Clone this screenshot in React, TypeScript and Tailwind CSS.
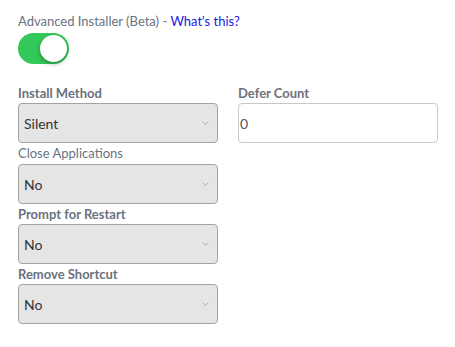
import React, { useState } from 'react';

const font = { fontFamily: 'Lato, "Open Sans", sans-serif' };

function Chevron() {
  return (
    <svg width="7" height="4" viewBox="0 0 7 4" className="absolute right-[8px] top-1/2 -translate-y-1/2" fill="none">
      <path d="M0.5 0.5 L3.5 3.5 L6.5 0.5" stroke="#b0b0b0" strokeWidth="1" />
    </svg>
  );
}

function SelectBox({ value }: { value: string }) {
  return (
    <div className="relative w-[200px] h-[40px] bg-[#e5e5e5] border border-[#a3a3a3] rounded-[4px] flex items-center pl-[5px] text-[14px] text-[#333]">
      {value}
      <Chevron />
    </div>
  );
}

function Toggle({ on, onChange }: { on: boolean; onChange: (v: boolean) => void }) {
  return (
    <button
      onClick={() => onChange(!on)}
      className={`relative w-[51px] h-[31px] rounded-full ${on ? 'bg-[#34c759]' : 'bg-[#e5e5e5]'}`}
    >
      <span
        className={`absolute top-[2px] w-[27px] h-[27px] rounded-full bg-white shadow-[0_2px_4px_rgba(0,0,0,0.3)] ${on ? 'left-[22px]' : 'left-[2px]'}`}
      />
    </button>
  );
}

export default function App() {
  const [enabled, setEnabled] = useState(true);

  return (
    <div className="w-[455px] h-[347px] bg-white pl-[18px] pt-[13px]" style={font}>
      <div className="text-[13px] leading-[16px] text-[#6b7280]">
        Advanced Installer (Beta) - <span className="text-[#1a1ae6]">What's this?</span>
      </div>
      <div className="mt-[4px]">
        <Toggle on={enabled} onChange={setEnabled} />
      </div>

      <div className="flex gap-[20px] mt-[13px]">
        <div className="flex flex-col">
          <label className="text-[13px] leading-[20px] font-bold text-[#6b7280]">Install Method</label>
          <SelectBox value="Silent" />
          <label className="text-[13px] leading-[21px] text-[#6b7280]">Close Applications</label>
          <SelectBox value="No" />
          <label className="text-[13px] leading-[20px] font-bold text-[#6b7280]">Prompt for Restart</label>
          <SelectBox value="No" />
          <label className="text-[13px] leading-[20px] font-bold text-[#6b7280]">Remove Shortcut</label>
          <SelectBox value="No" />
        </div>
        <div className="flex flex-col">
          <label className="text-[13px] leading-[20px] font-bold text-[#6b7280]">Defer Count</label>
          <input
            defaultValue="0"
            className="w-[200px] h-[40px] border border-[#c8c8c8] rounded-[4px] pl-[1px] text-[14px] text-[#555] outline-none"
            style={font}
          />
        </div>
      </div>
    </div>
  );
}
